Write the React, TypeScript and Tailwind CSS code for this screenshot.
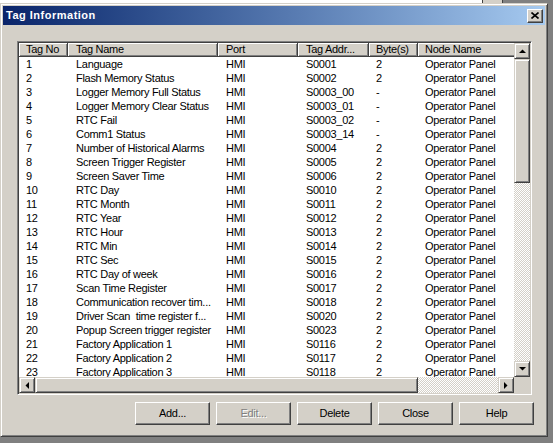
import React from "react";

const font = "font-['Liberation_Sans',Arial,sans-serif]";

const rows: [string, string, string, string, string][] = [
  ["1", "Language", "HMI", "S0001", "2"],
  ["2", "Flash Memory Status", "HMI", "S0002", "2"],
  ["3", "Logger Memory Full Status", "HMI", "S0003_00", "-"],
  ["4", "Logger Memory Clear Status", "HMI", "S0003_01", "-"],
  ["5", "RTC Fail", "HMI", "S0003_02", "-"],
  ["6", "Comm1 Status", "HMI", "S0003_14", "-"],
  ["7", "Number of Historical Alarms", "HMI", "S0004", "2"],
  ["8", "Screen Trigger Register", "HMI", "S0005", "2"],
  ["9", "Screen Saver Time", "HMI", "S0006", "2"],
  ["10", "RTC Day", "HMI", "S0010", "2"],
  ["11", "RTC Month", "HMI", "S0011", "2"],
  ["12", "RTC Year", "HMI", "S0012", "2"],
  ["13", "RTC Hour", "HMI", "S0013", "2"],
  ["14", "RTC Min", "HMI", "S0014", "2"],
  ["15", "RTC Sec", "HMI", "S0015", "2"],
  ["16", "RTC Day of week", "HMI", "S0016", "2"],
  ["17", "Scan Time Register", "HMI", "S0017", "2"],
  ["18", "Communication recover tim...", "HMI", "S0018", "2"],
  ["19", "Driver Scan  time register f...", "HMI", "S0020", "2"],
  ["20", "Popup Screen trigger register", "HMI", "S0023", "2"],
  ["21", "Factory Application 1", "HMI", "S0116", "2"],
  ["22", "Factory Application 2", "HMI", "S0117", "2"],
  ["23", "Factory Application 3", "HMI", "S0118", "2"],
];

const cols = [
  { label: "Tag No", w: "w-[49px] pl-[7px]" },
  { label: "Tag Name", w: "w-[150px] pl-[8px]" },
  { label: "Port", w: "w-[80px] pl-[8px]" },
  { label: "Tag Addr...", w: "w-[71px] pl-[8px]" },
  { label: "Byte(s)", w: "w-[49px] pl-[7px]" },
  { label: "Node Name", w: "w-[130px] pl-[7px]" },
];

// raised 3d edge used by scrollbar parts
const raised =
  "bg-[#d4d0c8] border border-t-[#d4d0c8] border-l-[#d4d0c8] border-r-[#404040] border-b-[#404040] shadow-[inset_1px_1px_#fff,inset_-1px_-1px_#808080]";

const dither =
  "[background-image:repeating-conic-gradient(#ffffff_0%_25%,#d4d0c8_0%_50%)] [background-size:2px_2px]";

const Arrow = ({ dir }: { dir: "up" | "down" | "left" | "right" }) => {
  const pts = {
    up: "0,4 7,4 3.5,0.5",
    down: "0,0 7,0 3.5,3.5",
    left: "4,0 4,7 0.5,3.5",
    right: "0,0 0,7 3.5,3.5",
  }[dir];
  const vertical = dir === "up" || dir === "down";
  return (
    <svg width={vertical ? 7 : 4} height={vertical ? 4 : 7} viewBox={vertical ? "0 0 7 4" : "0 0 4 7"}>
      <polygon points={pts} fill="#000" />
    </svg>
  );
};

const ScrollBtn = ({ dir }: { dir: "up" | "down" | "left" | "right" }) => (
  <div className={`${raised} flex h-[16px] w-[16px] shrink-0 items-center justify-center`}>
    <Arrow dir={dir} />
  </div>
);

const PushButton = ({ label, disabled }: { label: string; disabled?: boolean }) => (
  <div
    className={`flex h-[23px] w-[75px] items-center justify-center border border-t-white border-l-white border-r-[#404040] border-b-[#404040] bg-[#d4d0c8] text-[11px] shadow-[inset_-1px_-1px_#808080] ${
      disabled ? "text-[#808080] [text-shadow:1px_1px_#fff]" : "text-black"
    }`}
  >
    {label}
  </div>
);

export default function App() {
  return (
    <div className={`flex h-[443px] w-[553px] flex-col overflow-hidden bg-[#808080] ${font} tracking-[-0.3px]`}>
      {/* window behind */}
      <div className="flex h-[3px] shrink-0">
        <div className="w-[482px] bg-white" />
        <div className="w-px bg-[#404040]" />
        <div className="w-[19px] bg-[#d4d0c8]" />
        <div className="w-px bg-[#404040]" />
      </div>

      <div className="flex w-[548px] h-[434px] shrink-0 flex-col border border-t-[#d4d0c8] border-l-[#d4d0c8] border-r-[#404040] border-b-[#404040] bg-[#d4d0c8] p-[2px] shadow-[inset_1px_1px_#fff,inset_-1px_-1px_#808080]">
        {/* title bar */}
        <div className="flex h-[19px] shrink-0 items-center justify-between bg-linear-to-r from-[#0a246a] to-[#a6caf0] pl-[3px] pr-[2px]">
          <span className="text-[11px] font-bold tracking-[0.5px] text-white">Tag Information</span>
          <div className="flex h-[14px] w-[16px] items-center justify-center border border-t-white border-l-white border-r-[#404040] border-b-[#404040] bg-[#d4d0c8] shadow-[inset_-1px_-1px_#808080]">
            <svg width="8" height="7" viewBox="0 0 8 7">
              <path d="M0.5 0.5 L7.5 6.5 M7.5 0.5 L0.5 6.5" stroke="#000" strokeWidth="1.6" />
            </svg>
          </div>
        </div>

        {/* list view */}
        <div className="ml-[14px] mt-[16px] h-[354px] w-[515px] border border-t-[#808080] border-l-[#808080] border-r-white border-b-white p-px shadow-[inset_1px_1px_#404040,inset_-1px_-1px_#d4d0c8]">
          <div className="flex h-[334px]">
            <div className="w-[495px] overflow-hidden bg-white text-[11px] text-black">
              <div className="flex h-[14px] w-max">
                {cols.map((c) => (
                  <div
                    key={c.label}
                    className={`${c.w} flex shrink-0 items-center overflow-hidden whitespace-nowrap border-r border-b border-[#404040] bg-[#d4d0c8] shadow-[inset_1px_1px_#fff,inset_-1px_-1px_#808080]`}
                  >
                    {c.label}
                  </div>
                ))}
              </div>
              {rows.map((r) => (
                <div key={r[0]} className="flex h-[14px] w-max items-center whitespace-pre leading-[13px]">
                  <div className={`${cols[0].w} shrink-0`}>{r[0]}</div>
                  <div className={`${cols[1].w} shrink-0 overflow-hidden`}>{r[1]}</div>
                  <div className={`${cols[2].w} shrink-0`}>{r[2]}</div>
                  <div className={`${cols[3].w} shrink-0`}>{r[3]}</div>
                  <div className={`${cols[4].w} shrink-0`}>{r[4]}</div>
                  <div className={`${cols[5].w} shrink-0`}>Operator Panel</div>
                </div>
              ))}
            </div>
            {/* vertical scrollbar */}
            <div className="flex w-[16px] flex-col">
              <ScrollBtn dir="up" />
              <div className={`${raised} h-[124px] shrink-0`} />
              <div className={`flex-1 ${dither}`} />
              <ScrollBtn dir="down" />
            </div>
          </div>
          <div className="flex h-[16px]">
            <div className="flex w-[495px]">
              <ScrollBtn dir="left" />
              <div className={`${raised} w-[383px] shrink-0`} />
              <div className={`flex-1 ${dither}`} />
              <ScrollBtn dir="right" />
            </div>
            <div className="w-[16px] bg-[#d4d0c8]" />
          </div>
        </div>

        {/* buttons */}
        <div className="mt-[7px] flex justify-end gap-[6px] pr-[11px]">
          <PushButton label="Add..." />
          <PushButton label="Edit..." disabled />
          <PushButton label="Delete" />
          <PushButton label="Close" />
          <PushButton label="Help" />
        </div>
      </div>
    </div>
  );
}
